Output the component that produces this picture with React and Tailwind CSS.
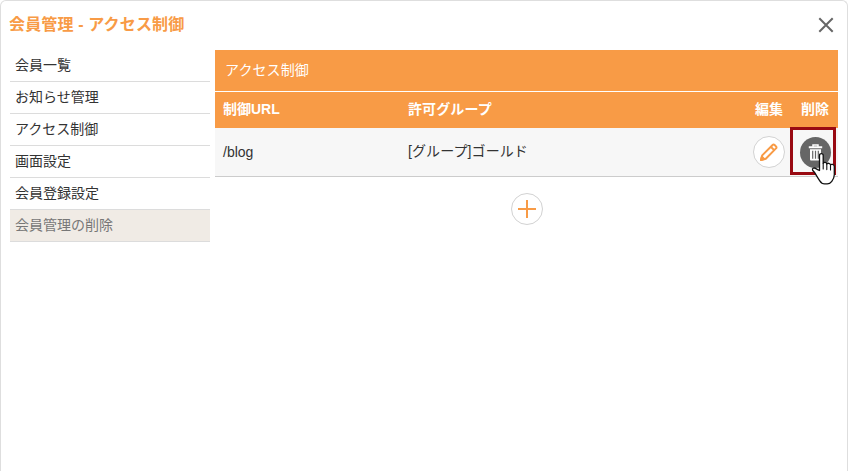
const MENU = [
  { label: "会員一覧" },
  { label: "お知らせ管理" },
  { label: "アクセス制御" },
  { label: "画面設定" },
  { label: "会員登録設定" },
  { label: "会員管理の削除", active: true },
];

const RULES = [{ url: "/blog", group: "[グループ]ゴールド" }];

export default function App() {
  return (
    <div className="h-[471px] w-[848px] overflow-hidden rounded-t-md border border-b-0 border-[#dedede] bg-white font-['Liberation_Sans','Noto_Sans_CJK_JP',sans-serif] text-[14px] text-[#333]">
      <header className="flex h-[49px] items-center justify-between pr-[13px] pb-0.5 pl-2">
        <h1 className="text-[16px] leading-6 font-bold tracking-[0.15px] text-[#f89b46]">会員管理 - アクセス制御</h1>
        <button aria-label="閉じる">
          <CloseIcon />
        </button>
      </header>

      <div className="flex gap-[5px] pl-[9px]">
        <nav className="w-[200px]">
          {MENU.map((item) => (
            <SideItem key={item.label} {...item} />
          ))}
        </nav>

        <main className="w-[623px]">
          <h2 className="h-[41px] bg-[#f89b46] pl-[10px] leading-[40px] tracking-[0.1px] text-white">アクセス制御</h2>
          <div className="mt-px flex h-9 bg-[#f89b46] leading-[34px] font-bold text-white">
            <div className="w-[185px] pl-2">制御URL</div>
            <div className="flex-1 pl-2 tracking-[0.1px]">許可グループ</div>
            <div className="w-[46px] text-center">編集</div>
            <div className="w-[46px] text-center">削除</div>
          </div>
          {RULES.map((rule) => (
            <RuleRow key={rule.url} {...rule} />
          ))}
          <div className="mt-4 flex justify-center">
            <button aria-label="追加" className="grid size-8 place-items-center rounded-full border border-[#d2d2d2] bg-white">
              <svg width="18" height="18" viewBox="0 0 18 18" stroke="#f89b46" strokeWidth="2">
                <path d="M9 0v18M0 9h18" />
              </svg>
            </button>
          </div>
        </main>
      </div>
    </div>
  );
}

function SideItem({ label, active }) {
  return (
    <a
      className={
        active
          ? "block h-8 border-b border-[#dcdcdc] bg-[#f0ebe5] pl-[5px] leading-[30px] text-[#777]"
          : "block h-8 border-b border-[#dcdcdc] pl-[5px] leading-[30px]"
      }
    >
      {label}
    </a>
  );
}

function RuleRow({ url, group }) {
  return (
    <div className="flex h-[49px] border-b border-[#ccc] bg-[#f7f7f7] leading-[48px]">
      <div className="w-[185px] pl-2">{url}</div>
      <div className="flex-1 pl-2 leading-[46px] tracking-[0.1px]">{group}</div>
      <div className="flex w-[46px] items-center justify-center">
        <button aria-label="編集" className="grid size-8 place-items-center rounded-full border border-[#d2d2d2] bg-white">
          <PencilIcon />
        </button>
      </div>
      <div className="relative flex w-[46px] items-center justify-center">
        <button aria-label="削除" className="grid size-[31px] place-items-center rounded-full bg-[#666]">
          <TrashIcon />
        </button>
        <div className="absolute -top-px -left-[2px] h-12 w-[46px] border-3 border-[#990a12]" />
        <HandCursor />
      </div>
    </div>
  );
}

function CloseIcon() {
  return (
    <svg width="16" height="16" viewBox="0 0 16 16" stroke="#666" strokeWidth="2">
      <path d="M1.3 1.3l13.4 13.4M14.7 1.3L1.3 14.7" />
    </svg>
  );
}

function PencilIcon() {
  return (
    <svg width="20" height="20" viewBox="0 0 20 20" fill="none" stroke="#f89b46" strokeWidth="2" strokeLinejoin="round">
      <path d="M2 18l1.2-4.6L13.6 3q1-1 2 0L17 4.4q1 1 0 2L6.8 16.8z" />
      <path d="M11.8 4.8l3.6 3.6" />
      <path d="M2 18l.9-3.4 2.5 2.5z" fill="#f89b46" />
    </svg>
  );
}

function TrashIcon() {
  return (
    <svg width="15" height="17" viewBox="0 0 15 17" fill="none" stroke="#fff">
      <path d="M.8 3.3h13.4" strokeWidth="2" />
      <path d="M5 2.8V1h5v1.8" strokeWidth="1.5" />
      <path d="M2 5.2h11v10.3q0 1-1 1H3q-1 0-1-1z" fill="#fff" stroke="none" />
      <path d="M4.7 6.7v8M7.5 6.7v8M10.3 6.7v8" stroke="#666" strokeWidth="1.2" />
    </svg>
  );
}

// pointer hanging over the delete button
function HandCursor() {
  return (
    <svg
      className="absolute top-[23px] left-[18px] z-10"
      width="27"
      height="35"
      viewBox="0 0 27 35"
      fill="#fff"
      stroke="#111"
      strokeWidth="1.3"
      strokeLinejoin="round"
      strokeLinecap="round"
    >
      <path d="M9.5 19.5V4.5c0-2.6 3.7-2.6 3.7 0v7.8c.6-1.3 3.3-1.2 3.6.7.7-1.2 3.4-.9 3.7.9.8-1.1 3.8-.6 3.8 1.6v8.3c0 3-1.2 4.8-2.5 6.5-1.3 1.8-2.6 2.6-4.6 2.6h-2.6c-2.2 0-3.6-1-4.8-3-1.6-2.6-3.4-5.3-4.8-7.8-.6-1.1-1.9-2-2.4-3-.7-1.7 1.2-2.6 2.9-1.7 1.5.8 2.6 1.4 4 2.1z" />
      <path d="M13.2 12.3v5.7M16.8 13v5.6M20.5 13.9v5" strokeWidth="1.1" />
    </svg>
  );
}
